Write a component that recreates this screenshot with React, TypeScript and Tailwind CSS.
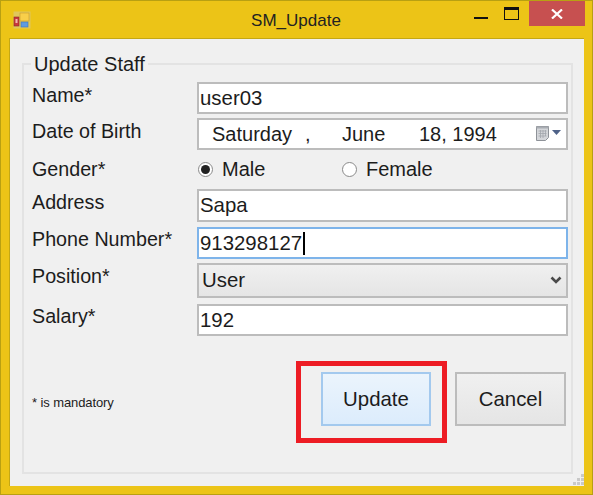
const font = "font-['Liberation_Sans',Arial,sans-serif]";

function AppIcon() {
  return (
    <svg width="18" height="18" viewBox="0 0 18 18" className="block">
      <rect x="0.5" y="0.5" width="17" height="17" fill="#d8c98a" opacity="0.6" />
      <rect x="1" y="6" width="5" height="9" fill="#c8383c" stroke="#8a2a2a" strokeWidth="0.6" />
      <rect x="2.5" y="8" width="2" height="4" fill="#f2b8b0" />
      <rect x="7" y="2" width="9" height="8" fill="#f8cf4a" stroke="#c89a28" strokeWidth="0.6" />
      <rect x="8" y="11" width="7" height="5" fill="#5f9be0" stroke="#3f73b8" strokeWidth="0.6" />
    </svg>
  );
}

function CalendarIcon() {
  return (
    <svg width="26" height="18" viewBox="0 0 26 18" className="block">
      <path d="M1.5 1.5h12v11l-3 3h-9z" fill="#d4d6da" stroke="#8e9298" />
      <path d="M1.5 1.5h12v2h-12z" fill="#a9adb3" />
      <path d="M3.5 6h8M3.5 8.5h8M3.5 11h8M5.5 5v8M8 5v8M10.5 5v6" stroke="#a2a6ac" strokeWidth="0.8" />
      <path d="M17 5h9l-4.500 5z" fill="#4f6288" />
    </svg>
  );
}

function Row({ label, labelTop, mb, children }: { label: string; labelTop: string; mb: string; children: React.ReactNode }) {
  return (
    <div className={`flex items-start ${mb}`}>
      <div className={`w-[173px] shrink-0 pl-[8px] text-[19.700px] leading-[24px] text-[#1c1c1c] ${labelTop}`}>{label}</div>
      {children}
    </div>
  );
}

const fieldBox = "flex w-[371px] items-center border-2 bg-white text-[#1c1c1c]";

export default function App() {
  return (
    <div className={`${font} flex h-[495px] w-[593px] flex-col border border-[#b8a012] bg-[#ecc417]`}>
      {/* Title bar */}
      <div className="flex h-[37px] shrink-0 items-center">
        <div className="ml-[12px] w-[228px]"><AppIcon /></div>
        <div className="w-[110px] pt-[2px] text-center text-[17px] text-[#222]">SM_Update</div>
        <div className="ml-auto mr-[7px] flex h-full items-start">
          <div className="mr-[16px] mt-[16px] h-[2px] w-[14px] bg-[#111]" />
          <div className="mr-[10px] mt-[6px] h-[13px] w-[15px] border border-t-[3px] border-[#111]" />
          <div className="flex h-[25px] w-[56px] items-center justify-center bg-[#c75050]">
            <svg width="12" height="10" viewBox="0 0 12 10">
              <path d="M1 .500l10 9M11 .500l-10 9" stroke="#fff" strokeWidth="2.200" />
            </svg>
          </div>
        </div>
      </div>

      {/* Client area */}
      <div className="relative mx-[8px] mb-[8px] flex-1 border-t border-l border-[#c4a814] bg-[#f0f0f0] pl-[12px] pr-[11px] pt-[24px] pb-[12px]">
        <div className="relative h-full border-2 border-[#e3e3e3]">
          <div className="absolute left-[7px] top-[-13px] bg-[#f0f0f0] px-[3px] text-[20px] leading-[24px] text-[#1c1c1c]">Update Staff</div>

          <div className="pt-[17px]">
            <Row label="Name*" labelTop="pt-[1px]" mb="mb-[4px]">
              <div className={`${fieldBox} h-[32px] border-[#bcbcbc] pl-[1px] text-[20.400px]`}>user03</div>
            </Row>
            <Row label="Date of Birth" labelTop="pt-[1px]" mb="mb-[6px]">
              <div className={`${fieldBox} h-[32px] border-[#bcbcbc] pl-[13px] pr-[5px] text-[20px]`}>
                <span className="w-[93px]">Saturday</span>
                <span className="w-[37px]">,</span>
                <span className="w-[77px]">June</span>
                <span>18, 1994</span>
                <span className="ml-auto"><CalendarIcon /></span>
              </div>
            </Row>
            <Row label="Gender*" labelTop="pt-[1px]" mb="mb-[2px]">
              <div className="flex h-[31px] w-[371px] items-center pb-[5px] text-[20px] text-[#1c1c1c]">
                <span className="ml-[1px] flex h-[15px] w-[15px] items-center justify-center rounded-full border border-[#8a8a8a] bg-white">
                  <span className="h-[9px] w-[9px] rounded-full bg-[#222]" />
                </span>
                <span className="ml-[9px] w-[120px]">Male</span>
                <span className="h-[15px] w-[15px] rounded-full border border-[#8a8a8a] bg-white" />
                <span className="ml-[9px]">Female</span>
              </div>
            </Row>
            <Row label="Address" labelTop="pt-[1px]" mb="mb-[5px]">
              <div className={`${fieldBox} h-[33px] border-[#bcbcbc] pl-[1px] text-[20.400px]`}>Sapa</div>
            </Row>
            <Row label="Phone Number*" labelTop="pt-[0px]" mb="mb-[4px]">
              <div className={`${fieldBox} h-[32px] border-[#7eb4ea] pl-[1px] text-[20.400px]`}>
                913298127<span className="ml-[1px] h-[23px] w-[2px] bg-black" />
              </div>
            </Row>
            <Row label="Position*" labelTop="pt-[1px]" mb="mb-[6px]">
              <div className="flex h-[35px] w-[371px] items-center justify-between border-2 border-[#bcbcbc] bg-gradient-to-b from-[#f0f0f0] to-[#e5e5e5] pl-[3px] pr-[4px] text-[20.400px] text-[#1c1c1c]">
                User
                <svg width="12" height="9" viewBox="0 0 12 9">
                  <path d="M1.500 1.500l4.500 4.500 4.500-4.500" fill="none" stroke="#4a4a4a" strokeWidth="2.600" />
                </svg>
              </div>
            </Row>
            <Row label="Salary*" labelTop="" mb="mb-[0px]">
              <div className={`${fieldBox} h-[32px] border-[#bcbcbc] pl-[1px] text-[20.400px]`}>192</div>
            </Row>
          </div>

          {/* Footer */}
          <div className="mt-[36px] flex items-center">
            <div className="ml-[8px] mt-[7px] w-[289px] shrink-0 text-[13px] tracking-[-0.1px] text-[#1c1c1c]">* is mandatory</div>
            <div className="relative shrink-0">
              <button className="block h-[54px] w-[110px] border-2 border-[#a3c9ee] bg-gradient-to-b from-[#ebf4fc] to-[#dcecfc] text-[20.400px] text-[#1c1c1c]">Update</button>
              <div className="absolute -left-[25px] -right-[16px] -top-[11px] -bottom-[17px] border-[5px] border-[#ed1c24]" />
            </div>
            <button className="ml-[24px] block h-[54px] w-[111px] shrink-0 border-2 border-[#bcbcbc] bg-gradient-to-b from-[#f0f0f0] to-[#e5e5e5] text-[20.400px] text-[#1c1c1c]">Cancel</button>
          </div>
        </div>

        {/* Resize grip */}
        <svg width="11" height="11" viewBox="0 0 11 11" className="absolute bottom-[1px] right-[0px]">
          <path d="M8 0h3v3H8zM4 4h3v3H4zM8 4h3v3H8zM0 8h3v3H0zM4 8h3v3H4zM8 8h3v3H8z" fill="#c9c9c9" />
        </svg>
      </div>
    </div>
  );
}
